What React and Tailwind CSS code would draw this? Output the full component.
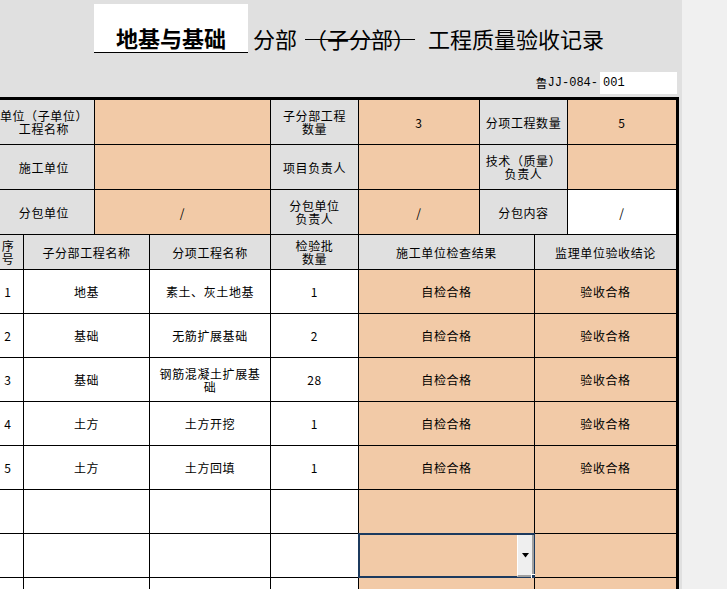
import React from 'react';

const topRows = [
  [
    { text: '单位（子单位）\n工程名称', bg: 'bg-[#e0e0e0]', pad: 'pr-[6px]' },
    { text: '', bg: 'bg-[#f2caa7]' },
    { text: '子分部工程\n数量', bg: 'bg-[#e0e0e0]' },
    { text: '3', bg: 'bg-[#f2caa7]' },
    { text: '分项工程数量', bg: 'bg-[#e0e0e0]' },
    { text: '5', bg: 'bg-[#f2caa7]' },
  ],
  [
    { text: '施工单位', bg: 'bg-[#e0e0e0]', pad: 'pr-[6px]' },
    { text: '', bg: 'bg-[#f2caa7]' },
    { text: '项目负责人', bg: 'bg-[#e0e0e0]' },
    { text: '', bg: 'bg-[#f2caa7]' },
    { text: '技术（质量）\n负责人', bg: 'bg-[#e0e0e0]' },
    { text: '', bg: 'bg-[#f2caa7]' },
  ],
  [
    { text: '分包单位', bg: 'bg-[#e0e0e0]', pad: 'pr-[6px]' },
    { text: '/', bg: 'bg-[#f2caa7]' },
    { text: '分包单位\n负责人', bg: 'bg-[#e0e0e0]' },
    { text: '/', bg: 'bg-[#f2caa7]' },
    { text: '分包内容', bg: 'bg-[#e0e0e0]' },
    { text: '/', bg: 'bg-white' },
  ],
];

const headers = ['序\n号', '子分部工程名称', '分项工程名称', '检验批\n数量', '施工单位检查结果', '监理单位验收结论'];

const items = [
  ['1', '地基', '素土、灰土地基', '1'],
  ['2', '基础', '无筋扩展基础', '2'],
  ['3', '基础', '钢筋混凝土扩展基\n础', '28'],
  ['4', '土方', '土方开挖', '1'],
  ['5', '土方', '土方回填', '1'],
  ['', '', '', ''],
  ['', '', '', ''],
  ['', '', '', ''],
];

function Cell({ text, bg, last, pad = '', height, children }) {
  return (
    <div
      className={`relative flex items-center justify-center whitespace-pre text-center text-[12px] leading-[13px] tracking-[0.6px] ${bg} ${pad} ${height} border-b border-black ${last ? '' : 'border-r'}`}
    >
      {text}
      {children}
    </div>
  );
}

function Selection() {
  return (
    <>
      <div className="absolute -left-[1px] -top-[1px] h-[45px] w-[177px] border-2 border-[#1c3a5e]" />
      <div className="absolute left-[158px] top-[1px] flex h-[42px] w-[17px] items-center justify-center border-b-2 border-l border-r-2 border-b-[#a0a0a0] border-l-white border-r-[#a0a0a0] bg-[#efefef]">
        <svg width="7" height="5" viewBox="0 0 7 5">
          <path d="M0 0h7L3.5 4.5z" fill="#000" />
        </svg>
      </div>
      <div className="absolute left-[172px] top-[40px] h-[6px] w-[6px] border border-white bg-[#1c3a5e]" />
    </>
  );
}

export default function App() {
  return (
    <div className="flex h-[589px] w-[727px] overflow-hidden bg-[#f0f0f0] font-['Noto_Sans_CJK_SC',sans-serif] text-black">
      <div className="w-[682px] shrink-0 bg-[#e0e0e0]">
        {/* title */}
        <div className="h-[97px] pt-[4px]">
          <div className="flex h-[49px] items-end text-[22px] leading-none">
            <div className="ml-[94px] flex h-[49px] w-[154px] items-end justify-center border-b border-black bg-white pb-[4px] font-bold">
              地基与基础
            </div>
            <span className="ml-[5px] pb-[4px]">分部</span>
            <span className="ml-[8px] pb-[4px] line-through decoration-1">（子分部）</span>
            <span className="ml-[13px] pb-[4px]">工程质量验收记录</span>
          </div>
          <div className="mt-[19px] flex items-center justify-end pr-[5px] text-[12px]">
            <span>鲁</span>
            <span className="mr-[2px] font-['Liberation_Mono',monospace]">JJ-084-</span>
            <div className="flex h-[22px] w-[77px] items-center bg-white pl-[3px] font-['Liberation_Mono',monospace]">001</div>
          </div>
        </div>

        <div className="w-[679px] border-r-[3px] border-t-[3px] border-black">
          <div className="grid grid-cols-[95px_176px_88px_121px_88px_108px]">
            {topRows.map((row, r) =>
              row.map((c, i) => (
                <Cell key={`${r}-${i}`} text={c.text} bg={c.bg} pad={c.pad} height="h-[45px]" last={i === 5} />
              ))
            )}
          </div>

          <div className="grid grid-cols-[24px_126px_121px_88px_176px_141px]">
            {headers.map((h, i) => (
              <Cell key={h} text={h} bg="bg-[#e0e0e0]" pad={i === 0 ? 'pr-[7px]' : ''} height="h-[35px]" last={i === 5} />
            ))}
            {items.map((row, r) => (
              <React.Fragment key={r}>
                <Cell text={row[0]} bg="bg-white" pad="pr-[7px]" height="h-[44px]" />
                <Cell text={row[1]} bg="bg-white" height="h-[44px]" />
                <Cell text={row[2]} bg="bg-white" height="h-[44px]" />
                <Cell text={row[3]} bg="bg-white" height="h-[44px]" />
                <Cell text={r < 5 ? '自检合格' : ''} bg="bg-[#f2caa7]" height="h-[44px]">
                  {r === 6 && <Selection />}
                </Cell>
                <Cell text={r < 5 ? '验收合格' : ''} bg="bg-[#f2caa7]" height="h-[44px]" last />
              </React.Fragment>
            ))}
          </div>
        </div>
      </div>
    </div>
  );
}
